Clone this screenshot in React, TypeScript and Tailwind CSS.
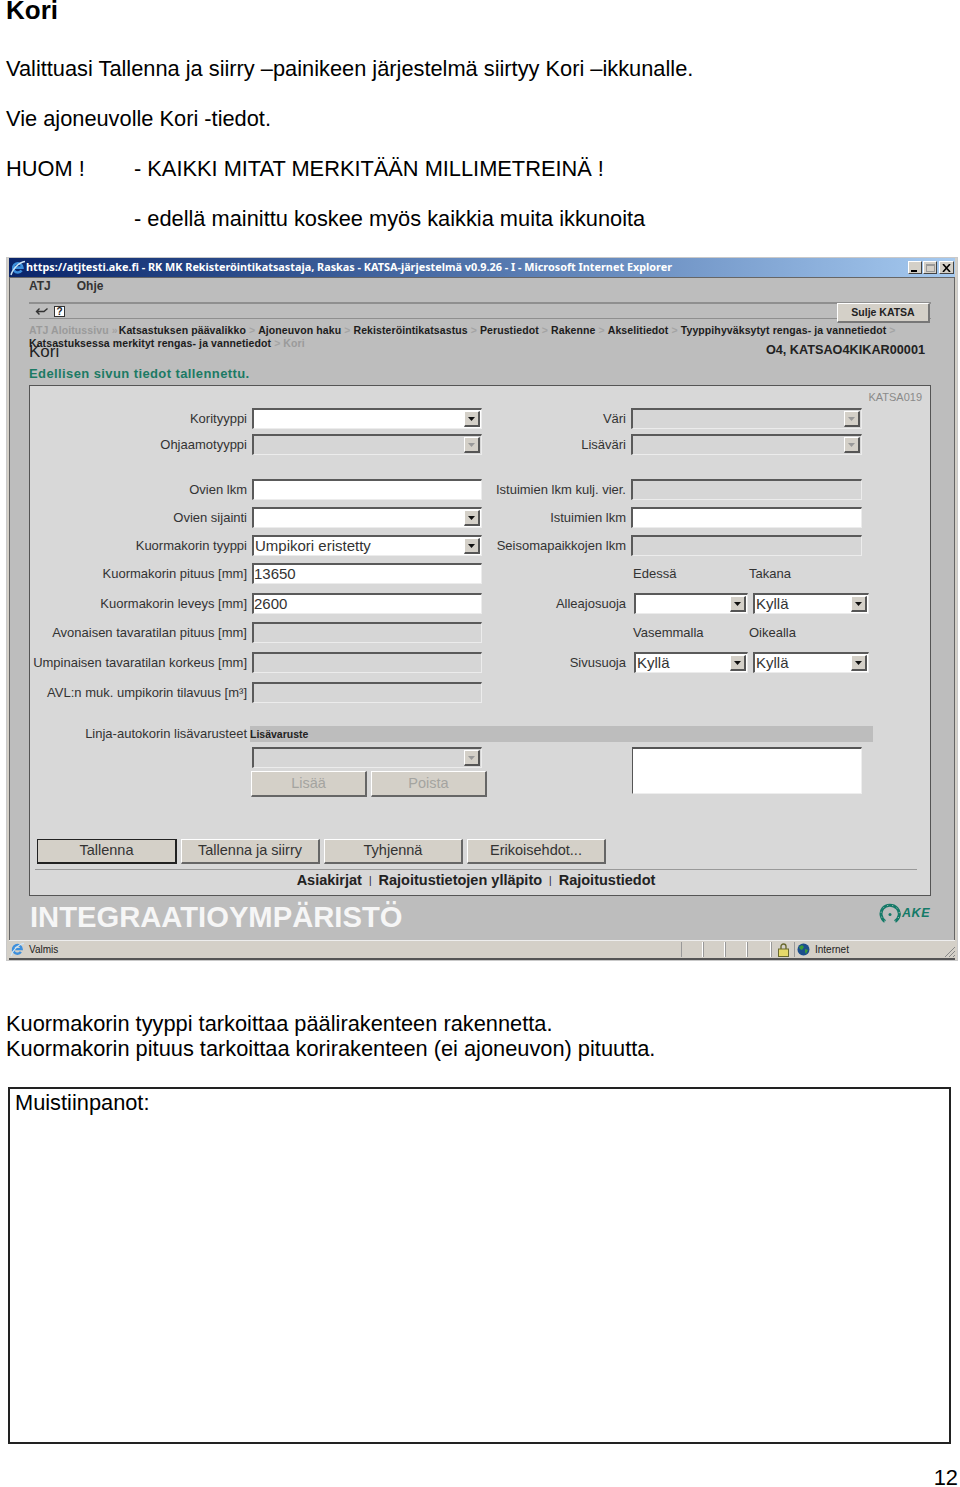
const font = "font-['Liberation_Sans',Arial,sans-serif]";

function Arrow({ off }: { off?: boolean }) {
  return (
    <div className="absolute right-[1px] top-[1px] bottom-[1px] w-[16px] flex items-center justify-center bg-[#d4d0c8] border-r-2 border-b-2 border-r-[#555] border-b-[#555] border-l border-t border-l-white border-t-white">
      <svg width="7" height="4" viewBox="0 0 7 4">
        <path d="M0 0h7L3.5 4z" fill={off ? "#999" : "#111"} />
      </svg>
    </div>
  );
}

function Field({ w, value, select, off }: { w: string; value?: string; select?: boolean; off?: boolean }) {
  return (
    <div
      className={`relative h-[21px] ${w} shrink-0 border-t-2 border-l-2 border-t-[#5a5a5a] border-l-[#5a5a5a] border-r border-b border-r-[#ececec] border-b-[#ececec] ${off ? "bg-[#d6d6d6]" : "bg-white"} ${select ? "pl-[1px]" : ""} text-[15px] leading-[18px] text-[#333] whitespace-nowrap`}
    >
      {value}
      {select && <Arrow off={off} />}
    </div>
  );
}

function Row({ label, top, children }: { label: string; top: string; children?: React.ReactNode }) {
  return (
    <div className={`flex items-center h-[21px] ${top}`}>
      <div className="w-[217px] shrink-0 text-right text-[13px] text-[#333] whitespace-nowrap mr-[5px]">{label}</div>
      {children}
    </div>
  );
}

function RightLabel({ children }: { children: string }) {
  return <div className="w-[144px] shrink-0 text-right text-[13px] text-[#333] whitespace-nowrap mr-[5px]">{children}</div>;
}

function WinButton({ w, children, strong, off }: { w: string; children: string; strong?: boolean; off?: boolean }) {
  return (
    <div
      className={`${w} ${off ? "h-[26px]" : "h-[25px]"} flex items-center justify-center shrink-0 bg-[#d4d0c8] text-[14.5px] ${off ? "text-[#a4a4a0]" : "text-[#333]"} ${strong ? "border border-[#222] border-r-2 border-b-2" : "border-t border-l border-t-white border-l-white border-r-2 border-b-2 border-r-[#666] border-b-[#666]"}`}
    >
      {children}
    </div>
  );
}

function TitleButton({ w, children }: { w: string; children: React.ReactNode }) {
  return (
    <div className={`${w} h-[13px] bg-[#d4d0c8] border-t border-l border-t-white border-l-white border-r border-b border-r-[#444] border-b-[#444] flex items-center justify-center`}>
      {children}
    </div>
  );
}

function IeIcon({ size }: { size: number }) {
  return (
    <svg width={size} height={size} viewBox="0 0 16 16" className="shrink-0">
      <path d="M11.6 10.5A4.6 4.6 0 1 1 12.4 7.6H4" fill="none" stroke="#3d8fdc" strokeWidth="2.6" />
      <path d="M1 15C2 10 9 2 15 1.5" stroke="#cfe6f7" strokeWidth="1.3" fill="none" />
    </svg>
  );
}

function Crumb({ children, dim }: { children: string; dim?: boolean }) {
  return <span className={dim ? "text-[#9a9a9a]" : "text-[#1c1c1c]"}>{children}</span>;
}

function Sep() {
  return <span className="text-[#a4a4a4] mx-[3px]">&gt;</span>;
}

function Browser() {
  return (
    <div className="mt-[13px] ml-[6px] w-[952px] h-[704px] flex flex-col border border-[#c9c9c9] bg-[#d4d0c8] px-[2px]">
      <div className="h-[19px] shrink-0 flex items-center bg-gradient-to-r from-[#0a246a] to-[#a6caf0] pl-[1px] pr-[1px]">
        <IeIcon size={16} />
        <span className="font-['Noto_Sans',sans-serif] font-bold text-[10.83px] text-white whitespace-nowrap flex-1">
          https://atjtesti.ake.fi - RK MK Rekisteröintikatsastaja, Raskas - KATSA-järjestelmä v0.9.26 - I - Microsoft Internet Explorer
        </span>
        <div className="flex">
          <TitleButton w="w-[14px]"><span className="w-[6px] h-[2px] bg-black mt-[6px] mr-[2px]" /></TitleButton>
          <div className="ml-[1px]"><TitleButton w="w-[14px]"><span className="w-[9px] h-[8px] border border-[#9a9a9a] border-t-2" /></TitleButton></div>
          <div className="ml-[2px]"><TitleButton w="w-[15px]"><svg width="9" height="8" viewBox="0 0 9 8"><path d="M1 0l7 8M8 0L1 8" stroke="#000" strokeWidth="1.6" /></svg></TitleButton></div>
        </div>
      </div>
      <div className="flex-1 flex flex-col bg-[#bdbdbd] border-t border-t-[#666] border-l border-l-[#666] border-r border-r-[#666] pl-[19px] pr-[23px] min-h-0">
        <div className="h-[24px] flex items-start pt-[1px] gap-[26px] text-[12px] leading-[14px] font-bold text-[#333]">
          <span>ATJ</span>
          <span>Ohje</span>
        </div>
        <div className="h-[17px] relative border-t-2 border-b border-t-[#8f8f8f] border-b-[#8f8f8f] flex items-center gap-[6px] pl-[6px]">
          <svg width="13" height="8" viewBox="0 0 13 8"><path d="M12.5 1.5L9 4.5H2M4.5 1.5L1.5 4.5l3 3" fill="none" stroke="#333" strokeWidth="1.4" /></svg>
          <span className="w-[11px] h-[11px] border border-[#333] bg-white text-[10px] leading-[10px] font-bold text-center text-[#222]">?</span>
          <div className="absolute right-[1px] top-[-1px] w-[93px] h-[20px] flex items-center justify-center bg-[#d4d0c8] border-r-2 border-b-2 border-r-[#777] border-b-[#777] border-t border-l border-t-white border-l-white text-[10.5px] font-bold text-[#222]">
            Sulje KATSA
          </div>
        </div>
        <div className="text-[10.5px] leading-[13px] font-bold tracking-[0.1px] mt-[5px] h-[26px] whitespace-nowrap">
          <div>
            <Crumb dim>ATJ Aloitussivu</Crumb> <span className="text-[#a4a4a4] mr-[-2px]">»</span> <Crumb>Katsastuksen päävalikko</Crumb><Sep /><Crumb>Ajoneuvon haku</Crumb><Sep /><Crumb>Rekisteröintikatsastus</Crumb><Sep /><Crumb>Perustiedot</Crumb><Sep /><Crumb>Rakenne</Crumb><Sep /><Crumb>Akselitiedot</Crumb><Sep /><Crumb>Tyyppihyväksytyt rengas- ja vannetiedot</Crumb><Sep />
          </div>
          <div>
            <Crumb>Katsastuksessa merkityt rengas- ja vannetiedot</Crumb><Sep /><Crumb dim>Kori</Crumb>
          </div>
        </div>
        <div className="flex justify-between items-center h-[16px] mt-[-6px] pr-[6px]">
          <span className="text-[17px] text-[#222]">Kori</span>
          <span className="text-[12.7px] font-bold text-[#222] mb-[2px]">O4, KATSAO4KIKAR00001</span>
        </div>
        <div className="text-[13px] tracking-[0.4px] font-bold text-[#1c7a64] mt-[6px] h-[16px] leading-[16px]">Edellisen sivun tiedot tallennettu.</div>
        <div className="h-[511px] mt-[3px] shrink-0 bg-[#d8d8d8] border border-[#555] relative">
          <div className="absolute right-[8px] top-[3px] text-[11px] text-[#8a8a8a]">KATSA019</div>
          <Row label="Korityyppi" top="mt-[22px]">
            <Field w="w-[230px]" select />
            <RightLabel>Väri</RightLabel>
            <Field w="w-[231px]" select off />
          </Row>
          <Row label="Ohjaamotyyppi" top="mt-[5px]">
            <Field w="w-[230px]" select off />
            <RightLabel>Lisäväri</RightLabel>
            <Field w="w-[231px]" select off />
          </Row>
          <Row label="Ovien lkm" top="mt-[24px]">
            <Field w="w-[230px]" />
            <RightLabel>Istuimien lkm kulj. vier.</RightLabel>
            <Field w="w-[231px]" off />
          </Row>
          <Row label="Ovien sijainti" top="mt-[7px]">
            <Field w="w-[230px]" select />
            <RightLabel>Istuimien lkm</RightLabel>
            <Field w="w-[231px]" />
          </Row>
          <Row label="Kuormakorin tyyppi" top="mt-[7px]">
            <Field w="w-[230px]" value="Umpikori eristetty" select />
            <RightLabel>Seisomapaikkojen lkm</RightLabel>
            <Field w="w-[231px]" off />
          </Row>
          <Row label="Kuormakorin pituus [mm]" top="mt-[7px]">
            <Field w="w-[230px]" value="13650" />
            <div className="ml-[151px] w-[116px] text-[13px] text-[#333]">Edessä</div>
            <div className="text-[13px] text-[#333]">Takana</div>
          </Row>
          <Row label="Kuormakorin leveys [mm]" top="mt-[9px]">
            <Field w="w-[230px]" value="2600" />
            <RightLabel>Alleajosuoja</RightLabel>
            <div className="ml-[3px] flex gap-[5px]">
              <Field w="w-[114px]" select />
              <Field w="w-[116px]" value="Kyllä" select />
            </div>
          </Row>
          <Row label="Avonaisen tavaratilan pituus [mm]" top="mt-[8px]">
            <Field w="w-[230px]" off />
            <div className="ml-[151px] w-[116px] text-[13px] text-[#333]">Vasemmalla</div>
            <div className="text-[13px] text-[#333]">Oikealla</div>
          </Row>
          <Row label="Umpinaisen tavaratilan korkeus [mm]" top="mt-[9px]">
            <Field w="w-[230px]" off />
            <RightLabel>Sivusuoja</RightLabel>
            <div className="ml-[3px] flex gap-[5px]">
              <Field w="w-[114px]" value="Kyllä" select />
              <Field w="w-[116px]" value="Kyllä" select />
            </div>
          </Row>
          <Row label="AVL:n muk. umpikorin tilavuus [m³]" top="mt-[9px]">
            <Field w="w-[230px]" off />
          </Row>
          <div className="flex items-center h-[16px] mt-[23px]">
            <div className="w-[217px] shrink-0 text-right text-[13px] text-[#333] whitespace-nowrap">Linja-autokorin lisävarusteet</div>
            <div className="ml-[3px] w-[623px] h-[16px] bg-[#bdbdbd] text-[10.5px] leading-[16px] font-bold text-[#222]">Lisävaruste</div>
          </div>
          <div className="flex mt-[5px]">
            <div className="w-[222px] shrink-0" />
            <div className="w-[235px] shrink-0">
              <Field w="w-[230px]" select off />
              <div className="flex gap-[4px] mt-[3px] ml-[-1px]">
                <WinButton w="w-[116px]" off>Lisää</WinButton>
                <WinButton w="w-[116px]" off>Poista</WinButton>
              </div>
            </div>
            <div className="ml-[145px] w-[230px] h-[47px] bg-white border-t-2 border-l border-t-[#555] border-l-[#555] border-r border-b border-r-[#eee] border-b-[#eee]" />
          </div>
          <div className="flex gap-[4px] ml-[7px] mt-[42px]">
            <WinButton w="w-[140px]" strong>Tallenna</WinButton>
            <WinButton w="w-[139px]">Tallenna ja siirry</WinButton>
            <WinButton w="w-[139px]">Tyhjennä</WinButton>
            <WinButton w="w-[139px]">Erikoisehdot...</WinButton>
          </div>
          <div className="ml-[5px] w-[882px] mt-[5px] border-t border-t-[#999] flex justify-center gap-[7px] pt-[1px] text-[14.5px] font-bold text-[#222] items-center h-[21px] whitespace-nowrap">
            <span>Asiakirjat</span><span className="font-normal text-[10px]">|</span><span>Rajoitustietojen ylläpito</span><span className="font-normal text-[10px]">|</span><span>Rajoitustiedot</span>
          </div>
        </div>
        <div className="flex-1 flex items-center justify-between pl-[1px] pr-[1px]">
          <span className="text-[29.2px] font-bold text-[#f6f6f6] leading-none">INTEGRAATIOYMPÄRISTÖ</span>
          <div className="flex items-center gap-[1px] mb-[10px]">
            <svg width="22" height="20" viewBox="0 0 22 20">
              <path d="M6 18.5C1.5 15 .8 9 4 5.2S14 1 18 5.2s2.5 10-2 13.3" fill="none" stroke="#147a68" strokeWidth="3" />
              <path d="M6 18.5C1.5 15 .8 9 4 5.2S14 1 18 5.2s2.5 10-2 13.3" fill="none" stroke="#bdbdbd" strokeWidth="1" strokeDasharray="1 4" />
              <circle cx="11" cy="11.5" r="1.5" fill="#147a68" />
            </svg>
            <span className="text-[12.5px] leading-none font-bold italic tracking-[0.5px] text-[#147a68]">AKE</span>
          </div>
        </div>
      </div>
      <div className="h-[20px] shrink-0 flex items-center bg-[#d4d0c8] border-t border-t-[#eee] border-b-2 border-b-[#555] pl-[1px] text-[10px] text-[#222]">
        <IeIcon size={15} />
        <span className="ml-[4px] w-[657px]">Valmis</span>
        <div className="flex h-[15px] items-stretch">
          <span className="w-[22px] border-l border-r border-l-[#999] border-r-white" />
          <span className="w-[22px] border-r border-r-white border-l border-l-[#999]" />
          <span className="w-[22px] border-r border-r-white border-l border-l-[#999]" />
          <span className="w-[24px] border-r border-r-white border-l border-l-[#999]" />
          <span className="w-[23px] flex items-center justify-center border-l border-l-[#999]">
            <svg width="11" height="14" viewBox="0 0 11 14"><path d="M3 6V3.5a2.5 2.5 0 015 0V6" fill="none" stroke="#6a6a30" strokeWidth="1.4" /><rect x="0.5" y="6" width="10" height="7.5" fill="#e6d96a" stroke="#6a6a30" /></svg>
          </span>
          <span className="flex items-center gap-[5px] border-l border-l-[#999] pl-[2px] w-[150px]">
            <svg width="13" height="13" viewBox="0 0 13 13"><circle cx="6.5" cy="6.5" r="6" fill="#1c4f8c" /><path d="M2 4l3-2 2 2-2 3-2-1zM8 6l3 1-2 4-1-2z" fill="#3a9a3a" /></svg>
            <span>Internet</span>
          </span>
          <svg width="11" height="11" viewBox="0 0 11 11" className="self-end"><path d="M1 11L11 1M5 11l6-6M9 11l2-2" stroke="#888" strokeWidth="1" /></svg>
        </div>
      </div>
    </div>
  );
}

export default function App() {
  return (
    <div className={`${font} w-[960px] h-[1487px] bg-white text-black overflow-hidden relative`}>
      <h1 className="pl-[6px] h-[22px] text-[26px] leading-[21px] font-bold">Kori</h1>
      <div className="pl-[6px] pt-[22px] text-[21.8px] leading-[50px]">
        <p>Valittuasi Tallenna ja siirry –painikeen järjestelmä siirtyy Kori –ikkunalle.</p>
        <p>Vie ajoneuvolle Kori -tiedot.</p>
        <div className="flex">
          <span className="w-[128px]">HUOM !</span>
          <span>- KAIKKI MITAT MERKITÄÄN MILLIMETREINÄ !</span>
        </div>
        <p className="pl-[128px]">- edellä mainittu koskee myös kaikkia muita ikkunoita</p>
      </div>
      <Browser />
      <div className="pl-[6px] mt-[50px] text-[21.8px] leading-[25px]">
        <p>Kuormakorin tyyppi tarkoittaa päälirakenteen rakennetta.</p>
        <p>Kuormakorin pituus tarkoittaa korirakenteen (ei ajoneuvon) pituutta.</p>
      </div>
      <div className="ml-[8px] mt-[26px] w-[943px] h-[357px] border-2 border-[#222] pl-[5px] text-[21.8px] leading-[27px]">Muistiinpanot:</div>
      <div className="text-right pr-[2px] mt-[24px] text-[21.8px] leading-[19px]">12</div>
    </div>
  );
}
